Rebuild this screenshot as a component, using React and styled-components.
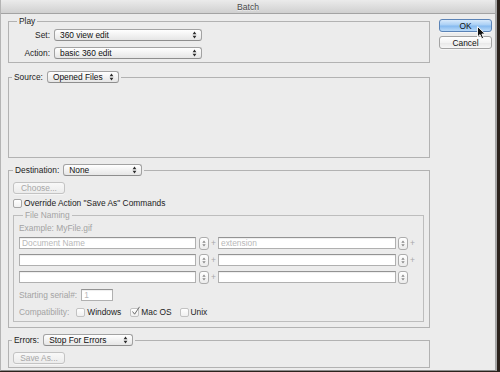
import React from "react";
import styled, { createGlobalStyle } from "styled-components";

const GlobalStyle = createGlobalStyle`
  html, body {
    margin: 0;
    padding: 0;
    background: #2b221c;
  }
  body {
    width: 500px;
    height: 372px;
    overflow: hidden;
    font-family: "Liberation Sans", Arial, sans-serif;
  }
`;

const Window = styled.div`
  width: 497px;
  height: 371px;
  box-sizing: border-box;
  background: #ececec;
  border-left: 1px solid #b4b4b4;
  border-right: 2px solid #a6a6a6;
  border-bottom: 1px solid #8c8c8c;
  display: flex;
  flex-direction: column;
  font-size: 8.4px;
  color: #1c1c1c;
`;

const TitleBar = styled.div`
  height: 13px;
  flex: none;
  background: linear-gradient(#ebebeb, #d0d0d0);
  border-bottom: 1px solid #a3a3a3;
  display: flex;
  align-items: center;
  justify-content: center;
  font-size: 8.6px;
  color: #4a4a4a;
  text-shadow: 0 1px 0 rgba(255, 255, 255, 0.6);
`;

const Body = styled.div`
  display: flex;
  padding: 1px 0 0 7px;
`;

const Main = styled.div`
  width: 422px;
  display: flex;
  flex-direction: column;
`;

const Side = styled.div`
  width: 53px;
  margin: 4px 0 0 9px;
  display: flex;
  flex-direction: column;
  gap: 4px;
  position: relative;
`;

const Group = styled.fieldset`
  margin: ${(p) => p.$mt || 0}px 0 0;
  padding: 0;
  min-inline-size: 0;
  border: 1px solid ${(p) => (p.$inner ? "#bdbdbd" : "#b2b2b2")};
  box-sizing: border-box;
`;

const Legend = styled.legend`
  margin-left: ${(p) => p.$ml || 3}px;
  padding: 0 2px;
  display: flex;
  align-items: center;
  gap: 4px;
  height: 12px;
  line-height: 12px;
  color: ${(p) => (p.$muted ? "#a3a3a3" : "#1c1c1c")};
`;

const Inner = styled.div`
  display: flex;
  flex-direction: column;
  padding: ${(p) => p.$pad};
  min-height: ${(p) => p.$minH || 0}px;
`;

const FormRow = styled.div`
  display: grid;
  grid-template-columns: 41px 148px;
  column-gap: 4px;
  align-items: center;
  height: 12px;
  margin-top: ${(p) => p.$mt || 0}px;
`;

const RowLabel = styled.span`
  text-align: right;
`;

const PopupBox = styled.div`
  width: ${(p) => p.$w}px;
  height: 12px;
  box-sizing: border-box;
  border: 1px solid #a2a2a2;
  border-bottom-color: #8e8e8e;
  border-radius: 3px;
  background: linear-gradient(#ffffff, #f1f1f1 55%, #e6e6e6);
  display: flex;
  align-items: center;
  justify-content: space-between;
  padding: 0 4px 0 5px;
  color: #111;
  line-height: 10px;
`;

const Popup = ({ width, children }) => (
  <PopupBox $w={width}>
    <span>{children}</span>
    <svg width="5" height="8" viewBox="0 0 5 8">
      <path d="M0.6 3.3 L2.5 0.6 L4.4 3.3 Z M0.6 4.7 L2.5 7.4 L4.4 4.7 Z" fill="#2c2c2c" />
    </svg>
  </PopupBox>
);

const PushButton = styled.div`
  width: ${(p) => p.$w || 52}px;
  height: ${(p) => p.$h || 12}px;
  box-sizing: border-box;
  border-radius: 3px;
  display: flex;
  align-items: center;
  justify-content: center;
  border: 1px solid ${(p) => (p.$primary ? "#5b83b6" : p.$disabled ? "#c3c3c3" : "#a3a3a3")};
  background: ${(p) =>
    p.$primary
      ? "linear-gradient(#d7e9fb, #a9cff5 45%, #86baf0 55%, #b9daf8)"
      : p.$disabled
      ? "linear-gradient(#f8f8f8, #ececec)"
      : "linear-gradient(#ffffff, #f3f3f3 50%, #e9e9e9 55%, #f6f6f6)"};
  color: ${(p) => (p.$disabled ? "#a7a7a7" : "#111")};
  box-shadow: 0 1px 0 rgba(255, 255, 255, 0.5);
`;

const CheckRow = styled.div`
  display: flex;
  align-items: center;
  height: 12px;
  margin-top: ${(p) => p.$mt || 0}px;
`;

const Box = styled.span`
  width: 9px;
  height: 9px;
  box-sizing: border-box;
  border: 1px solid ${(p) => (p.$muted ? "#c2c2c2" : "#a6a6a6")};
  border-radius: 2px;
  background: linear-gradient(#ffffff, #f0f0f0);
  margin-right: 2px;
  position: relative;
  flex: none;
`;

const Tick = styled.svg`
  position: absolute;
  left: 0px;
  top: -3px;
`;

const Check = ({ checked, muted, children, gapAfter }) => (
  <>
    <Box $muted={muted}>
      {checked && (
        <Tick width="10" height="10" viewBox="0 0 10 10">
          <path d="M1.5 5.5 L3.6 8.2 L8.5 0.8" stroke="#6b6b6b" strokeWidth="1" fill="none" />
        </Tick>
      )}
    </Box>
    <CheckText $gap={gapAfter}>{children}</CheckText>
  </>
);

const CheckText = styled.span`
  margin-right: ${(p) => p.$gap || 0}px;
`;

const MutedText = styled.div`
  color: #a3a3a3;
  height: 12px;
  line-height: 12px;
  margin-right: ${(p) => p.$mr || 0}px;
  margin-top: ${(p) => p.$mt || 0}px;
`;

const NameRow = styled.div`
  display: flex;
  align-items: center;
  height: 12px;
  margin-top: ${(p) => p.$mt || 0}px;
`;

const Field = styled.div`
  width: ${(p) => p.$w}px;
  height: 12px;
  box-sizing: border-box;
  background: #fff;
  border: 1px solid #b0b0b0;
  border-top-color: #939393;
  box-shadow: inset 0 1px 1px rgba(0, 0, 0, 0.07);
  color: #b8b8b8;
  line-height: 10px;
  padding-left: 2px;
  margin-right: ${(p) => p.$mr || 0}px;
`;

const StepperBox = styled.div`
  width: 10px;
  height: 13px;
  box-sizing: border-box;
  border: 1px solid #acacac;
  border-radius: 3px;
  background: linear-gradient(#ffffff, #ececec);
  display: flex;
  align-items: center;
  justify-content: center;
`;

const Stepper = () => (
  <StepperBox>
    <svg width="4" height="7" viewBox="0 0 4 7">
      <path d="M0.3 2.8 L2 0.4 L3.7 2.8 Z M0.3 4.2 L2 6.6 L3.7 4.2 Z" fill="#8a8a8a" />
    </svg>
  </StepperBox>
);

const Plus = styled.span`
  width: 9px;
  text-align: center;
  color: #a8a8a8;
  visibility: ${(p) => (p.$hidden ? "hidden" : "visible")};
`;

const Cursor = styled.svg`
  position: absolute;
  left: 38px;
  top: 7px;
`;

const nameRows = [
  { left: "Document Name", right: "extension", mt: 3, endPlus: true },
  { left: "", right: "", mt: 5, endPlus: true },
  { left: "", right: "", mt: 5, endPlus: false },
];

export default function App() {
  return (
    <>
      <GlobalStyle />
      <Window>
        <TitleBar>Batch</TitleBar>
        <Body>
          <Main>
            <Group>
              <Legend $ml={8}>Play</Legend>
              <Inner $pad="2px 0 3px 0">
                <FormRow>
                  <RowLabel>Set:</RowLabel>
                  <Popup width={148}>360 view edit</Popup>
                </FormRow>
                <FormRow $mt={6}>
                  <RowLabel>Action:</RowLabel>
                  <Popup width={148}>basic 360 edit</Popup>
                </FormRow>
              </Inner>
            </Group>

            <Group $mt={8}>
              <Legend $ml={3}>
                Source:
                <Popup width={72}>Opened Files</Popup>
              </Legend>
              <Inner $minH={74} />
            </Group>

            <Group $mt={6}>
              <Legend $ml={4}>
                Destination:
                <Popup width={79}>None</Popup>
              </Legend>
              <Inner $pad="6px 5px 5px 4px">
                <PushButton $disabled>Choose...</PushButton>
                <CheckRow $mt={3}>
                  <Check>Override Action "Save As" Commands</Check>
                </CheckRow>
                <Group $inner>
                  <Legend $ml={9} $muted>
                    File Naming
                  </Legend>
                  <Inner $pad="1px 0 3px 5px">
                    <MutedText>Example: MyFile.gif</MutedText>
                    {nameRows.map((row, i) => (
                      <NameRow key={i} $mt={row.mt}>
                        <Field $w={177} $mr={3}>{row.left}</Field>
                        <Stepper />
                        <Plus>+</Plus>
                        <Field $w={178} $mr={2}>{row.right}</Field>
                        <Stepper />
                        <Plus $hidden={!row.endPlus}>+</Plus>
                      </NameRow>
                    ))}
                    <NameRow $mt={6}>
                      <MutedText $mr={4}>Starting serial#:</MutedText>
                      <Field $w={32}>1</Field>
                    </NameRow>
                    <CheckRow $mt={5}>
                      <MutedText $mr={7}>Compatibility:</MutedText>
                      <Check muted gapAfter={9}>Windows</Check>
                      <Check muted checked gapAfter={8}>Mac OS</Check>
                      <Check muted>Unix</Check>
                    </CheckRow>
                  </Inner>
                </Group>
              </Inner>
            </Group>

            <Group $mt={6}>
              <Legend $ml={3}>
                Errors:
                <Popup width={90}>Stop For Errors</Popup>
              </Legend>
              <Inner $pad="6px 0 3px 4px">
                <PushButton $disabled>Save As...</PushButton>
              </Inner>
            </Group>
          </Main>

          <Side>
            <PushButton $primary $w={53} $h={13}>OK</PushButton>
            <PushButton $w={53} $h={13}>Cancel</PushButton>
            <Cursor width="10" height="14" viewBox="0 0 10 14">
              <path
                d="M0.5 0.5 L0.5 11 L3 8.6 L4.8 12.8 L6.6 12 L4.9 8 L8.2 8 Z"
                fill="#111"
                stroke="#fff"
                strokeWidth="0.9"
              />
            </Cursor>
          </Side>
        </Body>
      </Window>
    </>
  );
}
